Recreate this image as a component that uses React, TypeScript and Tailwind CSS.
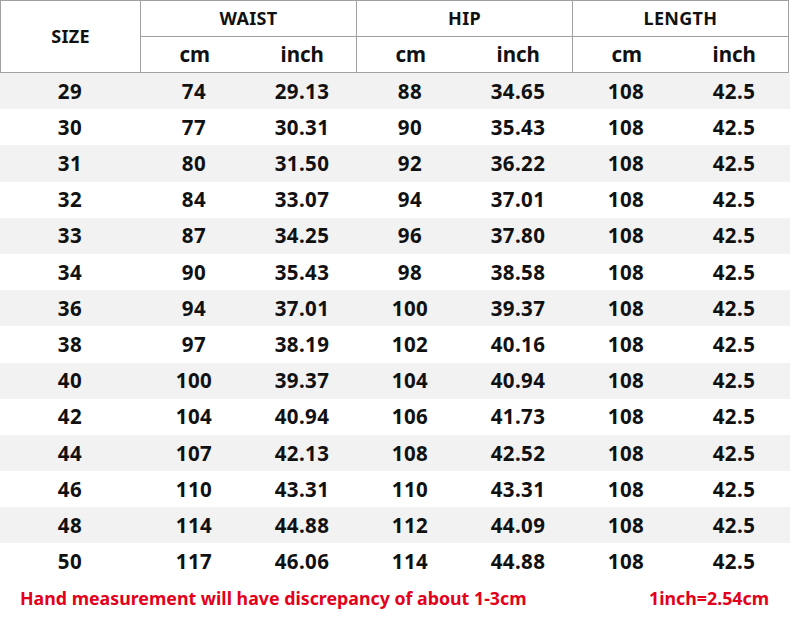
import React from 'react';

const rows: string[][] = [
  ['29', '74', '29.13', '88', '34.65', '108', '42.5'],
  ['30', '77', '30.31', '90', '35.43', '108', '42.5'],
  ['31', '80', '31.50', '92', '36.22', '108', '42.5'],
  ['32', '84', '33.07', '94', '37.01', '108', '42.5'],
  ['33', '87', '34.25', '96', '37.80', '108', '42.5'],
  ['34', '90', '35.43', '98', '38.58', '108', '42.5'],
  ['36', '94', '37.01', '100', '39.37', '108', '42.5'],
  ['38', '97', '38.19', '102', '40.16', '108', '42.5'],
  ['40', '100', '39.37', '104', '40.94', '108', '42.5'],
  ['42', '104', '40.94', '106', '41.73', '108', '42.5'],
  ['44', '107', '42.13', '108', '42.52', '108', '42.5'],
  ['46', '110', '43.31', '110', '43.31', '108', '42.5'],
  ['48', '114', '44.88', '112', '44.09', '108', '42.5'],
  ['50', '117', '46.06', '114', '44.88', '108', '42.5'],
];

const groups = ['WAIST', 'HIP', 'LENGTH'];

const App: React.FC = () => {
  return (
    <div
      className="w-[790px] h-[618px] bg-white text-[#111] overflow-hidden"
      style={{ fontFamily: '"Noto Sans", "Open Sans", Arial, sans-serif' }}
    >
      {/* header */}
      <div className="flex w-[789px] h-[73px] border border-[#a0a0a0] font-bold">
        <div className="w-[140px] flex items-center justify-center border-r border-[#a0a0a0] text-[18px] tracking-[0.3px]">
          SIZE
        </div>
        {groups.map((g, i) => (
          <div
            key={g}
            className={
              i < 2
                ? 'w-[216px] flex flex-col border-r border-[#a0a0a0]'
                : 'flex-1 flex flex-col'
            }
          >
            <div className="h-[36px] flex items-center justify-center border-b border-[#a0a0a0] text-[18px] tracking-[0.3px]">
              {g}
            </div>
            <div className="flex-1 grid grid-cols-2 text-[20.5px] items-center text-center">
              <span>cm</span>
              <span>inch</span>
            </div>
          </div>
        ))}
      </div>

      {/* data */}
      {rows.map((r, i) => (
        <div
          key={r[0]}
          className={
            (i % 2 === 0 ? 'bg-[#f2f2f2] ' : 'bg-white ') +
            'h-[36.2px] grid grid-cols-[140px_108px_108px_108px_108px_108px_108px] items-center text-center font-bold text-[20.5px] tracking-[0.4px]'
          }
        >
          {r.map((c, j) => (
            <span key={j}>{c}</span>
          ))}
        </div>
      ))}

      {/* footer */}
      <div className="flex justify-between items-center h-[38px] pl-[20px] pr-[21px] text-[#e3001b] font-bold text-[17.8px]">
        <span>Hand measurement will have discrepancy of about 1-3cm</span>
        <span>1inch=2.54cm</span>
      </div>
    </div>
  );
};

export default App;
